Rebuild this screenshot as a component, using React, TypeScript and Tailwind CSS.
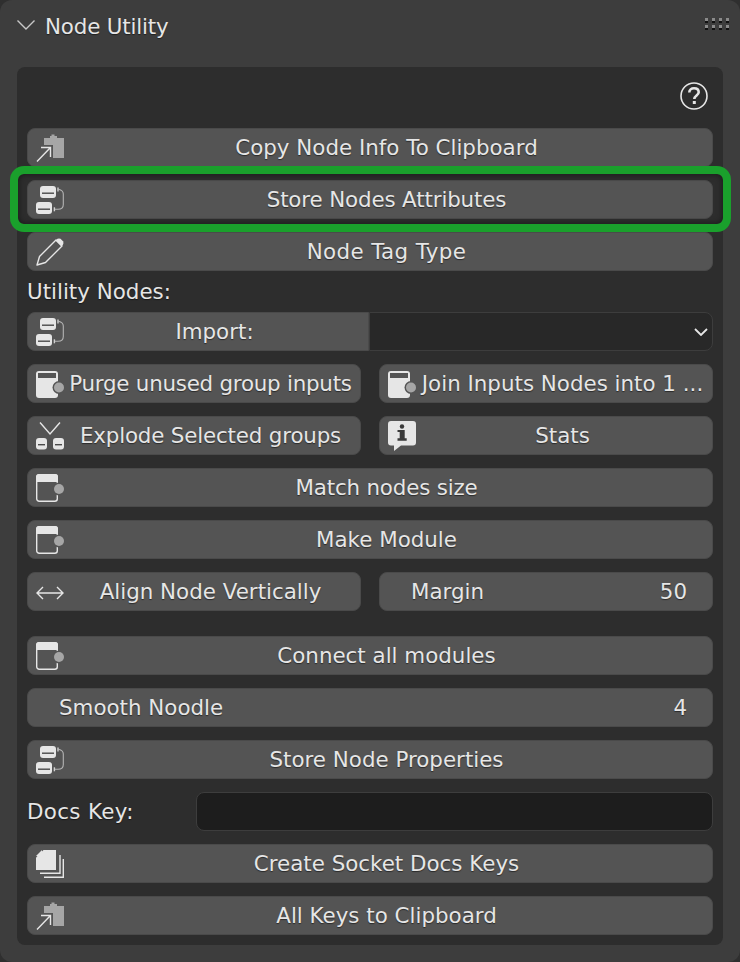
import React from 'react';

const Arrow = () => (
    <path d="M1 27.5L14 14M5 13.5H14.5V23" fill="none" stroke="#e6e6e6" strokeWidth="1.4" />
);

const CopyIcon = () => (
    <svg width="28" height="28" viewBox="0 0 28 28">
        <path d="M8 4H14V2H15.5V0.5H18.5V2H21V4H28V24H17V11H8Z" fill="#a6a6a6" />
        <Arrow />
    </svg>
);

const StoreIcon = () => (
    <svg width="28" height="28" viewBox="0 0 28 28">
        <rect x="4" y="0" width="16" height="12" rx="3" fill="#e6e6e6" />
        <rect x="0" y="16" width="16" height="12" rx="3" fill="#e6e6e6" />
        <rect x="6" y="6.5" width="12" height="1.4" fill="#4a4a4a" />
        <rect x="2" y="22.5" width="12" height="1.4" fill="#4a4a4a" />
        <path d="M22.5 3.3C25.5 4 27.3 5.3 27.3 8V18.5C27.3 21.5 25.5 23.3 22 23.3H18" fill="none" stroke="#b4b4b4" strokeWidth="1.1" />
        <rect x="21.3" y="1.5" width="1.4" height="4" fill="#d0d0d0" />
        <rect x="17.7" y="21.3" width="1.4" height="4" fill="#d0d0d0" />
    </svg>
);

const PencilIcon = () => (
    <svg width="28" height="28" viewBox="0 0 28 28">
        <path d="M1 27L3.5 18.5L20 2L26 8L9.5 24.5Z" fill="none" stroke="#e6e6e6" strokeWidth="1.4" strokeLinejoin="round" />
        <path d="M19.5 2.5L21.5 0.8Q23 0 24.5 0.8L27 3.3Q28 5 27 6.5L25.5 8.5Z" fill="#e6e6e6" />
    </svg>
);

const NodeFilledIcon = () => (
    <svg width="28" height="28" viewBox="0 0 28 28">
        <rect x="0" y="1" width="22" height="27" rx="3" fill="#e6e6e6" />
        <rect x="2" y="3" width="18" height="5" fill="#545454" />
        <circle cx="23" cy="17.5" r="6.5" fill="#545454" />
        <circle cx="23" cy="17.5" r="5" fill="#a6a6a6" />
    </svg>
);

const NodeOutlineIcon = () => (
    <svg width="28" height="28" viewBox="0 0 28 28">
        <rect x="0.7" y="0.7" width="20.6" height="26.6" rx="2.5" fill="none" stroke="#e6e6e6" strokeWidth="1.4" />
        <path d="M0 8V3Q0 0 3 0H19Q22 0 22 3V8Z" fill="#e6e6e6" />
        <circle cx="23" cy="15" r="6.5" fill="#545454" />
        <circle cx="23" cy="15" r="5" fill="#a6a6a6" />
    </svg>
);

const ExplodeIcon = () => (
    <svg width="28" height="28" viewBox="0 0 28 28">
        <path d="M4 0.5L14 12L24 0.5" fill="none" stroke="#e6e6e6" strokeWidth="1.4" />
        <rect x="0" y="16" width="11" height="11.5" rx="3" fill="#e6e6e6" />
        <rect x="17" y="16" width="11" height="11.5" rx="3" fill="#e6e6e6" />
        <rect x="2" y="22" width="7" height="1.4" fill="#4a4a4a" />
        <rect x="19" y="22" width="7" height="1.4" fill="#4a4a4a" />
    </svg>
);

const InfoIcon = () => (
    <svg width="28" height="30" viewBox="0 0 28 30">
        <path d="M3 0H25Q28 0 28 3V21.5Q28 24.5 25 24.5H13L6 30V24.5H3Q0 24.5 0 21.5V3Q0 0 3 0Z" fill="#e6e6e6" />
        <circle cx="14" cy="5.5" r="2.2" fill="#3a3a3a" />
        <path d="M9.5 9H16.7V17.2H18.7V19.7H9.5V17.2H11.7V11H9.5Z" fill="#3a3a3a" />
    </svg>
);

const ArrowsIcon = () => (
    <svg width="28" height="28" viewBox="0 0 28 28">
        <path d="M1 15H27M7 9L1 15L7 21M21 9L27 15L21 21" fill="none" stroke="#e6e6e6" strokeWidth="1.4" />
    </svg>
);

const PagesIcon = () => (
    <svg width="28" height="28" viewBox="0 0 28 28">
        <path d="M7.5 0H20V20H0V7.5Z" fill="#e6e6e6" />
        <path d="M0 6L6 0V6Z" fill="#e6e6e6" />
        <path d="M4 23.3H24V5M8 27.3H27.3V9" fill="none" stroke="#e6e6e6" strokeWidth="1.4" />
    </svg>
);

const btn = 'h-[39px] rounded-[8px] bg-[#545454] border border-[#4a4a4a] flex items-center text-[#e6e6e6]';

const Button = ({ icon, label, className = '', labelClass = '' }: { icon?: React.ReactNode; label: string; className?: string; labelClass?: string }) => (
    <div className={`${btn} ${className}`}>
        <div className="w-[37px] pl-[8px] shrink-0 flex items-center">{icon}</div>
        <span className={`flex-1 text-center whitespace-nowrap pr-[4px] pt-px ${labelClass}`}>{label}</span>
    </div>
);

const NumberField = ({ label, value, className = '' }: { label: string; value: string; className?: string }) => (
    <div className={`${btn} justify-between pl-[31px] pr-[25px] pt-px ${className}`}>
        <span>{label}</span>
        <span>{value}</span>
    </div>
);

const App: React.FC = () => {
    return (
        <div className="w-[740px] h-[962px] bg-[#2f2f2f] font-['DejaVu_Sans','Liberation_Sans',sans-serif] text-[21.4px] [text-shadow:0_1px_1px_rgba(0,0,0,0.5)]">
            <div className="h-full rounded-[12px] bg-[#3d3d3d] px-[17px] flex flex-col">
                {/* Panel header */}
                <div className="h-[67px] shrink-0 flex items-start relative">
                    <svg width="18" height="10" viewBox="0 0 18 10" className="mt-[20px]">
                        <path d="M0.5 0.5L9 9L17.5 0.5" fill="none" stroke="#c8c8c8" strokeWidth="1.4" />
                    </svg>
                    <span className="ml-[10px] mt-[13px] text-[#e6e6e6] leading-[28px] tracking-[-0.17px]">Node Utility</span>
                    <svg width="24" height="12" viewBox="0 0 24 12" className="absolute right-[-6px] top-[18px]">
                        {[0, 7, 14, 21].map((x) => (
                            <g key={x}>
                                <rect x={x} y="0" width="3" height="3" fill="#8a8a8a" />
                                <rect x={x} y="3" width="3" height="2" fill="#111111" />
                                <rect x={x} y="7" width="3" height="3" fill="#8a8a8a" />
                                <rect x={x} y="10" width="3" height="2" fill="#111111" />
                            </g>
                        ))}
                    </svg>
                </div>

                {/* Panel body */}
                <div className="h-[878px] rounded-[8px] bg-[#2d2d2d] px-[10px] text-[#e6e6e6]">
                    <div className="h-[61px] flex justify-end items-start pt-[15px] pr-[5px]">
                        <svg width="28" height="28" viewBox="0 0 28 28">
                            <circle cx="14" cy="14" r="13" fill="none" stroke="#e6e6e6" strokeWidth="1.6" />
                            <path d="M9.3 10.5C9.3 7.8 11.3 6.3 14 6.3C16.8 6.3 18.7 7.8 18.7 10.2C18.7 13.3 14.3 13.6 14.3 17" fill="none" stroke="#e6e6e6" strokeWidth="2.6" />
                            <rect x="12.8" y="19" width="3" height="3" fill="#e6e6e6" />
                        </svg>
                    </div>
                    <Button icon={<CopyIcon />} label="Copy Node Info To Clipboard" />
                    <div className="relative mt-[13px]">
                        <div className="absolute -left-[17px] -right-[18px] -top-[14px] -bottom-[13px] rounded-[14px] border-[8px] border-[#1aa02c] shadow-[inset_0_0_6px_rgba(0,0,0,0.5)]" />
                        <Button icon={<StoreIcon />} label="Store Nodes Attributes" labelClass="tracking-[-0.14px]" />
                    </div>
                    <Button icon={<PencilIcon />} label="Node Tag Type" className="mt-[13px]" labelClass="tracking-[0.38px]" />
                    <div className="h-[41px] flex items-center pt-px">Utility Nodes:</div>

                    <div className="h-[39px] flex">
                        <div className="w-[342px] rounded-l-[8px] bg-[#545454] border border-[#4a4a4a] flex items-center">
                            <div className="w-[37px] pl-[8px] shrink-0 flex items-center"><StoreIcon /></div>
                            <span className="flex-1 text-center pr-[4px] pt-px">Import:</span>
                        </div>
                        <div className="flex-1 rounded-r-[8px] bg-[#282828] border border-[#3d3d3d] flex items-center justify-end pr-[4px]">
                            <svg width="14" height="8" viewBox="0 0 14 8">
                                <path d="M1 1L7 7L13 1" fill="none" stroke="#e6e6e6" strokeWidth="1.8" />
                            </svg>
                        </div>
                    </div>

                    <div className="mt-[13px] grid grid-cols-2 gap-x-[18px] gap-y-[13px]">
                        <Button icon={<NodeFilledIcon />} label="Purge unused group inputs" labelClass="tracking-[-0.24px]" />
                        <Button icon={<NodeFilledIcon />} label="Join Inputs Nodes into 1 ..." />
                        <Button icon={<ExplodeIcon />} label="Explode Selected groups" labelClass="tracking-[-0.17px]" />
                        <Button icon={<InfoIcon />} label="Stats" />
                    </div>
                    <Button icon={<NodeOutlineIcon />} label="Match nodes size" className="mt-[13px]" labelClass="tracking-[-0.19px]" />
                    <Button icon={<NodeOutlineIcon />} label="Make Module" className="mt-[13px]" />
                    <div className="mt-[13px] grid grid-cols-2 gap-x-[18px]">
                        <Button icon={<ArrowsIcon />} label="Align Node Vertically" />
                        <NumberField label="Margin" value="50" />
                    </div>
                    <Button icon={<NodeOutlineIcon />} label="Connect all modules" className="mt-[25px]" />
                    <NumberField label="Smooth Noodle" value="4" className="mt-[13px]" />
                    <Button icon={<StoreIcon />} label="Store Node Properties" className="mt-[13px]" />
                    <div className="mt-[13px] h-[39px] flex items-center">
                        <span className="w-[169px] shrink-0 pt-px tracking-[0.35px]">Docs Key:</span>
                        <div className="flex-1 h-full rounded-[8px] bg-[#1d1d1d] border border-[#3d3d3d]" />
                    </div>
                    <Button icon={<PagesIcon />} label="Create Socket Docs Keys" className="mt-[13px]" />
                    <Button icon={<CopyIcon />} label="All Keys to Clipboard" className="mt-[13px]" />
                </div>
            </div>
        </div>
    );
};

export default App;
